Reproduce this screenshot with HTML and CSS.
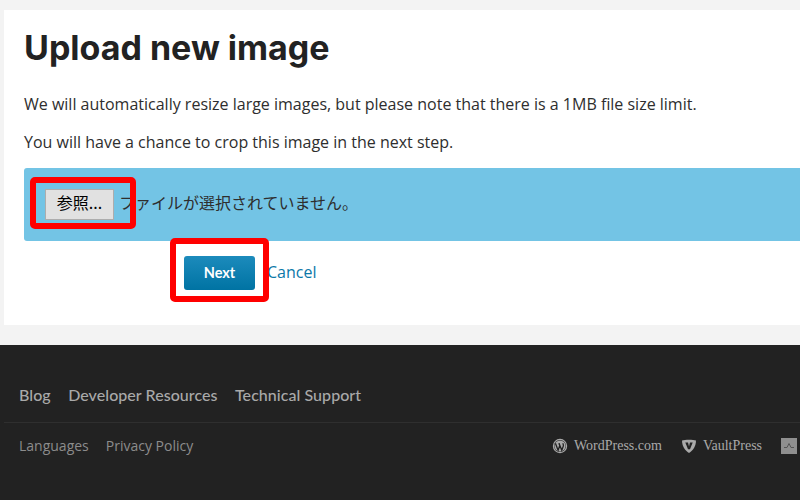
FILE: index.html
```html
<!DOCTYPE html>
<html lang="en">
<head>
<meta charset="utf-8">
<title>Upload new image</title>
<link rel="stylesheet" href="styles.css">
</head>
<body>
<main class="card">
  <h1 class="title">Upload new image</h1>
  <p class="note">We will automatically resize large images, but please note that there is a 1MB file size limit.</p>
  <p class="note">You will have a chance to crop this image in the next step.</p>
  <div class="filebox">
    <button class="browse" type="button">参照...</button>
    <span class="filename">ファイルが選択されていません。</span>
    <span class="mark mark-browse"></span>
  </div>
  <div class="actions">
    <button class="next" type="button">Next</button>
    <a class="cancel" href="#">Cancel</a>
    <span class="mark mark-next"></span>
  </div>
</main>
<footer class="footer">
  <nav class="primary">
    <a href="#">Blog</a>
    <a href="#">Developer Resources</a>
    <a href="#">Technical Support</a>
  </nav>
  <div class="secondary">
    <nav class="legal">
      <a href="#">Languages</a>
      <a href="#">Privacy Policy</a>
    </nav>
    <div class="brands">
      <a href="#" class="brand">
        <svg class="icon" viewBox="0 0 16 16" aria-hidden="true">
          <circle cx="8" cy="8" r="7.2" fill="#a9a9a9"/>
          <circle cx="8" cy="8" r="6" fill="#222"/>
          <circle cx="8" cy="8" r="5.600" fill="#a9a9a9"/>
          <path d="M3.400 5.300l2.700 7 1.700-4.800-1-2.200M7 5.300l2.800 7 1.500-4.200c.4-1.200-.1-2-.5-2.800" fill="none" stroke="#222" stroke-width="1.300"/>
        </svg>
        WordPress.com
      </a>
      <a href="#" class="brand">
        <svg class="icon" viewBox="0 0 16 16" aria-hidden="true">
          <path d="M1 2.500C4 1.500 12 1.500 15 2.500C15 8 12 12.500 8 15C4 12.500 1 8 1 2.500Z" fill="#a9a9a9"/>
          <path d="M4.300 4.500H7L8 8.500L9 4.500H11.700L9 11.300H7Z" fill="#222"/>
        </svg>
        VaultPress
      </a>
      <a href="#" class="brand" aria-label="Akismet">
        <svg class="icon" viewBox="0 0 16 16" aria-hidden="true">
          <rect x="0" y="0" width="16" height="16" fill="#8f8f8f"/>
          <path d="M3 9.500h3l2-4 2 4h3" fill="none" stroke="#555" stroke-width="1"/>
        </svg>
      </a>
    </div>
  </div>
</footer>
</body>
</html>
```

FILE: styles.css
```css
html, body {
  margin: 0;
  height: 500px;
  overflow: hidden;
}
body {
  background: #f3f3f3;
  padding-top: 10px;
  box-sizing: border-box;
  font-family: "Open Sans", sans-serif;
  color: #2e2e2e;
}
.card {
  background: #fff;
  margin: 0 0 20px 4px;
  padding: 20px 0 0 20px;
  height: 315px;
  box-sizing: border-box;
}
.title {
  margin: 0 0 26px;
  font-family: Inter, sans-serif;
  font-size: 34px;
  line-height: 36px;
  font-weight: 700;
  color: #222;
  white-space: nowrap;
}
.note {
  margin: 0 0 14px;
  font-size: 16px;
  line-height: 24px;
  white-space: nowrap;
}
.filebox {
  position: relative;
  display: flex;
  align-items: center;
  height: 73px;
  margin-top: 2px;
  padding-left: 21px;
  background: #73c4e5;
  border-radius: 3px 0 0 3px;
  white-space: nowrap;
}
.browse {
  width: 69px;
  height: 31px;
  padding: 0 0 5px;
  background: #e1e1e1;
  border: 1px solid #adadad;
  border-radius: 0;
  font: 16px "Noto Sans CJK JP", sans-serif;
  color: #000;
}
.filename {
  margin-left: 5px;
  padding-bottom: 6px;
  font: 16px "Noto Sans CJK JP", sans-serif;
  color: #2e2e2e;
}
.actions {
  position: relative;
  display: flex;
  align-items: center;
  gap: 12px;
  padding: 15px 0 0 160px;
}
.next {
  width: 71px;
  height: 34px;
  padding: 0 0 2px;
  background: linear-gradient(#1c8bbc, #0073a3);
  border: 0;
  border-radius: 3px;
  font: 700 14.500px Lato, sans-serif;
  color: #fff;
}
.cancel {
  padding-bottom: 2px;
  font-size: 16px;
  color: #0b78a8;
  text-decoration: none;
}
.mark {
  position: absolute;
  border: 6px solid #f00;
  border-radius: 5px;
  box-sizing: border-box;
}
.mark-browse {
  left: 6px;
  top: 9px;
  width: 106px;
  height: 52px;
}
.mark-next {
  left: 146px;
  top: -3px;
  width: 99px;
  height: 64px;
}
.footer {
  height: 155px;
  background: #222;
  overflow: hidden;
  white-space: nowrap;
}
.footer a {
  text-decoration: none;
}
.primary {
  display: flex;
  gap: 17.500px;
  height: 77px;
  padding: 38px 0 0 19px;
  box-sizing: border-box;
  font: 500 16px/24px Lato, sans-serif;
  letter-spacing: .05px;
}
.primary a {
  color: #a9a9a9;
}
.secondary {
  display: flex;
  justify-content: space-between;
  margin-left: 4px;
  padding: 11px 0 0 15px;
  border-top: 1px solid #2f2f2f;
}
.legal {
  display: flex;
  gap: 17px;
  font-size: 14px;
  line-height: 24px;
}
.legal a {
  color: #8c8c8c;
}
.brands {
  display: flex;
  flex: none;
  gap: 20px;
  width: 248px;
  font: 14px/24px "Liberation Serif", serif;
}
.brands .brand + .brand {
  margin-left: -1px;
}
.brand {
  display: flex;
  align-items: center;
  gap: 6px;
  color: #a9a9a9;
}
.icon {
  flex: none;
  width: 16px;
  height: 16px;
}
```
